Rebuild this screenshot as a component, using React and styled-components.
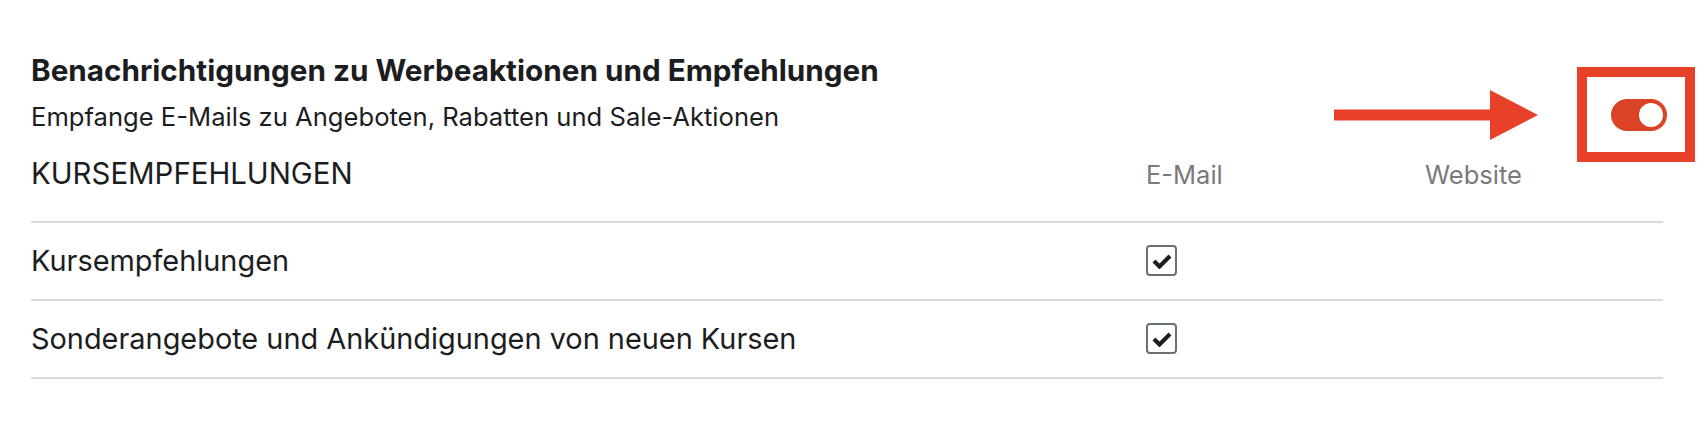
import styled, { createGlobalStyle } from 'styled-components'

const GlobalStyle = createGlobalStyle`
  body {
    margin: 0;
    background: #ffffff;
    font-family: Inter, "Noto Sans", "Liberation Sans", sans-serif;
    color: #1c1d1f;
  }
`;

const rows = [
  { label: 'Kursempfehlungen', email: true },
  { label: 'Sonderangebote und Ankündigungen von neuen Kursen', email: true },
];

const CheckIcon = () => (
  <svg width="20" height="16" viewBox="0 0 20 16">
    <polyline points="2,8 7.5,13.5 18,3" fill="none" stroke="#1c1d1f" strokeWidth="4.2" strokeLinecap="butt" strokeLinejoin="miter" />
  </svg>
);

const Arrow = () => (
  <ArrowSvg width="204" height="50" viewBox="0 0 204 50">
    <rect x="0" y="19.5" width="160" height="11" fill="#e8412a" />
    <polygon points="156,0 204,25 156,50" fill="#e8412a" />
  </ArrowSvg>
);

const App = () => {
  return <Page>
    <GlobalStyle />
    <Header>
      <HeaderText>
        <Title>Benachrichtigungen zu Werbeaktionen und Empfehlungen</Title>
        <Subtitle>Empfange E-Mails zu Angeboten, Rabatten und Sale-Aktionen</Subtitle>
      </HeaderText>
      <ToggleSlot>
        <Arrow />
        <Highlight />
        <Toggle role="switch" aria-checked="true">
          <Knob />
        </Toggle>
      </ToggleSlot>
    </Header>
    <Table>
      <HeadRow>
        <SectionLabel>KURSEMPFEHLUNGEN</SectionLabel>
        <ColumnLabel>E-Mail</ColumnLabel>
        <ColumnLabel>Website</ColumnLabel>
      </HeadRow>
      {rows.map(row => <Row key={row.label}>
        <RowLabel>{row.label}</RowLabel>
        <Cell>
          {row.email && <Checkbox><CheckIcon /></Checkbox>}
        </Cell>
        <Cell />
      </Row>)}
    </Table>
  </Page>
}

const Page = styled.div`
  width: 1636px;
  padding: 52px 0 0 31px;
`;

const Header = styled.div`
  display: flex;
  justify-content: space-between;
  align-items: flex-end;
`;

const HeaderText = styled.div`
  display: flex;
  flex-direction: column;
`;

const Title = styled.div`
  font-size: 29.7px;
  line-height: 36px;
  font-weight: 700;
`;

const Subtitle = styled.div`
  margin-top: 12.5px;
  font-size: 25.6px;
  line-height: 32px;
`;

const ToggleSlot = styled.div`
  position: relative;
  margin-bottom: 1.5px;
`;

const Toggle = styled.div`
  width: 56px;
  height: 32px;
  border-radius: 16px;
  background: #da4326;
  display: flex;
  align-items: center;
  justify-content: flex-end;
  padding: 0 4px;
  box-sizing: border-box;
`;

const Knob = styled.div`
  width: 24px;
  height: 24px;
  border-radius: 50%;
  background: #ffffff;
`;

const Highlight = styled.div`
  position: absolute;
  left: -34px;
  top: -32px;
  width: 118px;
  height: 95px;
  box-sizing: border-box;
  border: 10px solid #e8412a;
`;

const ArrowSvg = styled.svg`
  position: absolute;
  left: -277px;
  top: -9px;
  display: block;
`;

const Table = styled.div`
  margin-right: 4px;
  margin-top: 22.5px;
`;

const Grid = styled.div`
  display: grid;
  grid-template-columns: 1115px 279px 1fr;
  align-items: center;
`;

const HeadRow = styled(Grid)`
  padding-bottom: 26.5px;
  border-bottom: 2px solid #dadada;
  align-items: baseline;
`;

const SectionLabel = styled.div`
  font-size: 29.4px;
  line-height: 38px;
`;

const ColumnLabel = styled.div`
  font-size: 25.5px;
  line-height: 38px;
  color: #7a7a7a;
`;

const Row = styled(Grid)`
  height: 78px;
  box-sizing: border-box;
  border-bottom: 2px solid #dadada;
`;

const RowLabel = styled.div`
  font-size: 28.9px;
  line-height: 38px;
`;

const Cell = styled.div`
  display: flex;
  align-items: center;
`;

const Checkbox = styled.div`
  width: 31px;
  height: 31px;
  box-sizing: border-box;
  border: 2px solid #6a6f73;
  border-radius: 4px;
  display: flex;
  align-items: center;
  justify-content: center;
`;

export default App
